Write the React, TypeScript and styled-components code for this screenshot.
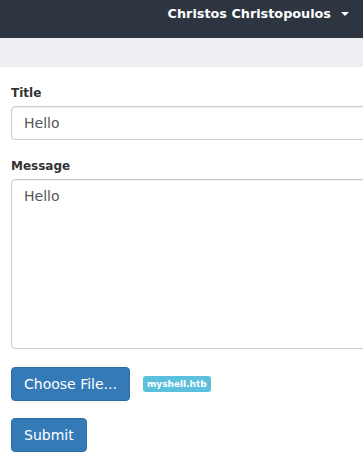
import React from "react";
import styled, { createGlobalStyle } from "styled-components";

const GlobalStyle = createGlobalStyle`
  body {
    margin: 0;
    background: #fff;
    font-family: "DejaVu Sans", "Liberation Sans", sans-serif;
    font-size: 14px;
    color: #333;
    overflow: hidden;
  }
`;

const Navbar = styled.div`
  height: 38px;
  background: #2c3540;
  display: flex;
  justify-content: flex-end;
  align-items: flex-start;
  padding-right: 14px;
`;

const UserMenu = styled.div`
  display: flex;
  align-items: center;
  gap: 10px;
  color: #fff;
  font-weight: bold;
  font-size: 12.8px;
  line-height: 14px;
  padding-top: 7px;
`;

const Caret = styled.span`
  width: 0;
  height: 0;
  border-left: 4px solid transparent;
  border-right: 4px solid transparent;
  border-top: 4px solid #fff;
`;

const Band = styled.div`
  height: 29px;
  background: #eeeff3;
`;

const Form = styled.form`
  padding: 16px 0 0 11px;
  width: 420px;
`;

const Group = styled.div`
  margin-bottom: 16px;
`;

const Label = styled.label`
  display: block;
  font-weight: bold;
  font-size: 12px;
  line-height: 20px;
  margin-bottom: 3px;
  color: #333;
`;

const Field = styled.div<{ $tall?: boolean }>`
  box-sizing: border-box;
  height: ${(p) => (p.$tall ? "170px" : "34px")};
  border: 1px solid #ccc;
  border-radius: 4px;
  box-shadow: inset 0 1px 1px rgba(0, 0, 0, 0.075);
  padding: 6px 12px;
  font-size: 14px;
  line-height: 20px;
  color: #555;
`;

const FileRow = styled.div`
  display: flex;
  align-items: center;
  gap: 13px;
  margin: 18px 0 17px;
`;

const Button = styled.button`
  box-sizing: border-box;
  height: 34px;
  padding: 6px 12px;
  font-family: inherit;
  font-size: 14px;
  line-height: 20px;
  color: #fff;
  background: #337ab7;
  border: 1px solid #2e6da4;
  border-radius: 4px;
`;

const Badge = styled.span`
  background: #5bc0de;
  color: #fff;
  font-weight: bold;
  font-size: 9px;
  line-height: 16px;
  padding: 0 4px;
  border-radius: 3px;
`;

export default function App() {
  return (
    <>
      <GlobalStyle />
      <Navbar>
        <UserMenu>
          Christos Christopoulos <Caret />
        </UserMenu>
      </Navbar>
      <Band />
      <Form>
        <Group>
          <Label>Title</Label>
          <Field>Hello</Field>
        </Group>
        <Group>
          <Label>Message</Label>
          <Field $tall>Hello</Field>
        </Group>
        <FileRow>
          <Button type="button">Choose File...</Button>
          <Badge>myshell.htb</Badge>
        </FileRow>
        <Button type="button">Submit</Button>
      </Form>
    </>
  );
}
